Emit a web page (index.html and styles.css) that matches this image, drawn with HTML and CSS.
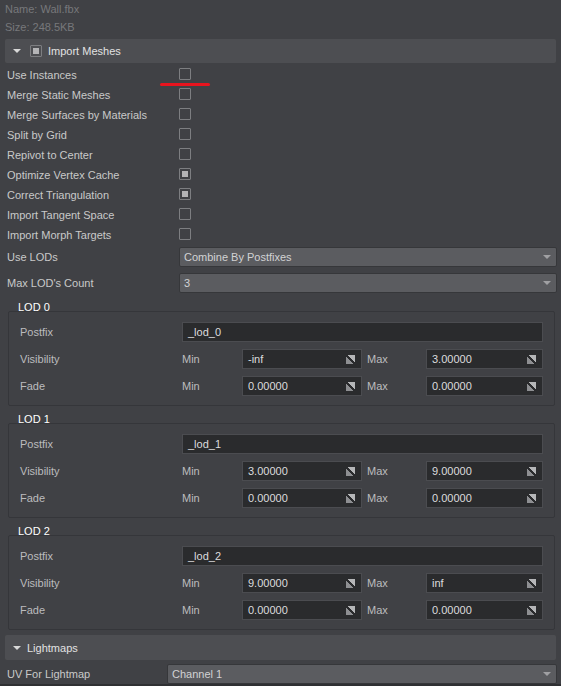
FILE: index.html
```html
<!DOCTYPE html>
<html lang="en">
<head>
  <meta charset="UTF-8">
  <meta name="viewport" content="width=device-width, initial-scale=1.0">
  <title>Import Settings</title>
  <link rel="stylesheet" href="styles.css">
</head>
<body>
  <div class="panel">
    <div class="info">Name: Wall.fbx</div>
    <div class="info">Size: 248.5KB</div>

    <div class="section-header">
      <span class="arrow"></span>
      <span class="checkbox partial"></span>
      <span>Import Meshes</span>
    </div>

    <div class="props">
      <div class="prop"><span>Use Instances</span><span class="checkbox"></span><span class="marker"></span></div>
      <div class="prop"><span>Merge Static Meshes</span><span class="checkbox"></span></div>
      <div class="prop"><span>Merge Surfaces by Materials</span><span class="checkbox"></span></div>
      <div class="prop"><span>Split by Grid</span><span class="checkbox"></span></div>
      <div class="prop"><span>Repivot to Center</span><span class="checkbox"></span></div>
      <div class="prop"><span>Optimize Vertex Cache</span><span class="checkbox checked"></span></div>
      <div class="prop"><span>Correct Triangulation</span><span class="checkbox checked"></span></div>
      <div class="prop"><span>Import Tangent Space</span><span class="checkbox"></span></div>
      <div class="prop"><span>Import Morph Targets</span><span class="checkbox"></span></div>
      <div class="prop combo-row"><span>Use LODs</span><div class="combo">Combine By Postfixes</div></div>
      <div class="prop combo-row"><span>Max LOD's Count</span><div class="combo">3</div></div>
    </div>

    <div class="lod-title first">LOD 0</div>
    <div class="lod-box">
      <span class="lbl">Postfix</span>
      <div class="field wide">_lod_0</div>
      <span class="lbl">Visibility</span>
      <span class="lbl">Min</span>
      <div class="field">-inf<span class="spin"></span></div>
      <span class="lbl max">Max</span>
      <div class="field">3.00000<span class="spin"></span></div>
      <span class="lbl">Fade</span>
      <span class="lbl">Min</span>
      <div class="field">0.00000<span class="spin"></span></div>
      <span class="lbl max">Max</span>
      <div class="field">0.00000<span class="spin"></span></div>
    </div>

    <div class="lod-title">LOD 1</div>
    <div class="lod-box">
      <span class="lbl">Postfix</span>
      <div class="field wide">_lod_1</div>
      <span class="lbl">Visibility</span>
      <span class="lbl">Min</span>
      <div class="field">3.00000<span class="spin"></span></div>
      <span class="lbl max">Max</span>
      <div class="field">9.00000<span class="spin"></span></div>
      <span class="lbl">Fade</span>
      <span class="lbl">Min</span>
      <div class="field">0.00000<span class="spin"></span></div>
      <span class="lbl max">Max</span>
      <div class="field">0.00000<span class="spin"></span></div>
    </div>

    <div class="lod-title">LOD 2</div>
    <div class="lod-box">
      <span class="lbl">Postfix</span>
      <div class="field wide">_lod_2</div>
      <span class="lbl">Visibility</span>
      <span class="lbl">Min</span>
      <div class="field">9.00000<span class="spin"></span></div>
      <span class="lbl max">Max</span>
      <div class="field">inf<span class="spin"></span></div>
      <span class="lbl">Fade</span>
      <span class="lbl">Min</span>
      <div class="field">0.00000<span class="spin"></span></div>
      <span class="lbl max">Max</span>
      <div class="field">0.00000<span class="spin"></span></div>
    </div>

    <div class="section-header lightmaps">
      <span class="arrow"></span>
      <span>Lightmaps</span>
    </div>

    <div class="prop combo-row uv"><span>UV For Lightmap</span><div class="combo">Channel 1</div></div>
  </div>
  <div class="splitter"></div>
</body>
</html>
```

FILE: styles.css
```css
body {
  margin: 0;
  background-color: #404145;
  font-family: "Liberation Sans", Arial, sans-serif;
  font-size: 11px;
  color: #c9c9c9;
  height: 686px;
  overflow: hidden;
  position: relative;
}

.panel {
  padding: 0 5px;
}

.info {
  height: 18px;
  line-height: 18px;
  color: #77787b;
}

.section-header {
  display: flex;
  align-items: center;
  height: 24px;
  margin-top: 3px;
  background-color: #4d4e52;
  border-radius: 2px;
  color: #e2e2e2;
}

.section-header .arrow {
  width: 0;
  height: 0;
  margin: 0 9px 0 8px;
  border-left: 4px solid transparent;
  border-right: 4px solid transparent;
  border-top: 4px solid #d8d8d8;
}

.section-header .checkbox {
  margin-right: 6px;
}

.lightmaps {
  margin-top: 5px;
  height: 25px;
}

.lightmaps .arrow {
  margin-right: 6px;
}

.props {
  margin-top: 2px;
}

.prop {
  display: grid;
  grid-template-columns: 172px 1fr;
  align-items: center;
  height: 20px;
  padding-left: 2px;
  position: relative;
}

.checkbox {
  width: 10px;
  height: 10px;
  border: 1px solid #7d7e81;
  border-radius: 1px;
  position: relative;
}

.prop .checkbox {
  margin-top: -2px;
}

.checkbox.checked::after,
.checkbox.partial::after {
  content: "";
  position: absolute;
  left: 2px;
  top: 2px;
  width: 6px;
  height: 6px;
  background-color: #b4b4b6;
}

.marker {
  position: absolute;
  left: 155px;
  top: 18px;
  width: 50px;
  height: 3px;
  border-radius: 2px;
  background-color: #e8141e;
}

.combo-row {
  height: 19px;
  margin-top: 2px;
  padding-left: 2px;
}

.combo-row + .combo-row {
  margin-top: 7px;
}

.combo {
  height: 18px;
  line-height: 18px;
  padding-left: 4px;
  background-color: #5b5c60;
  border: 1px solid #36373a;
  border-radius: 2px;
  color: #d2d2d4;
  position: relative;
  margin-right: -1px;
}

.combo::after {
  content: "";
  position: absolute;
  right: 5px;
  top: 7px;
  border-left: 4px solid transparent;
  border-right: 4px solid transparent;
  border-top: 4px solid #a0a0a3;
}

.uv {
  grid-template-columns: 160px 1fr;
  margin-top: 4px;
}

.lod-title {
  height: 12px;
  line-height: 12px;
  margin: 7px 0 -2px 13px;
  color: #ffffff;
  position: relative;
}

.lod-title.first {
  margin-top: 9px;
}

.lod-box {
  display: grid;
  grid-template-columns: 162px 60px 120px 64px 1fr;
  grid-auto-rows: 20px;
  row-gap: 7px;
  align-items: center;
  margin: 0 1px 0 3px;
  padding: 10px 11px 9px 11px;
  border: 1px solid #35363a;
  border-radius: 2px;
  color: #bcbcbe;
}

.lod-box .max {
  padding-left: 5px;
}

.field {
  height: 18px;
  line-height: 18px;
  padding-left: 5px;
  background-color: #2a2b2d;
  border: 1px solid #4b4c50;
  color: #dcdcde;
  position: relative;
}

.field.wide {
  grid-column: 2 / -1;
  padding-left: 5px;
}

.spin {
  position: absolute;
  right: 6px;
  top: 5px;
  width: 9px;
  height: 9px;
  background:
    linear-gradient(45deg, #8e8f92 0 40%, #2a2b2d 40% 60%, #b5b6b8 60% 100%);
}

.splitter {
  position: absolute;
  left: 0;
  right: 0;
  bottom: 0;
  height: 2px;
  background-color: #2f3033;
}
```
